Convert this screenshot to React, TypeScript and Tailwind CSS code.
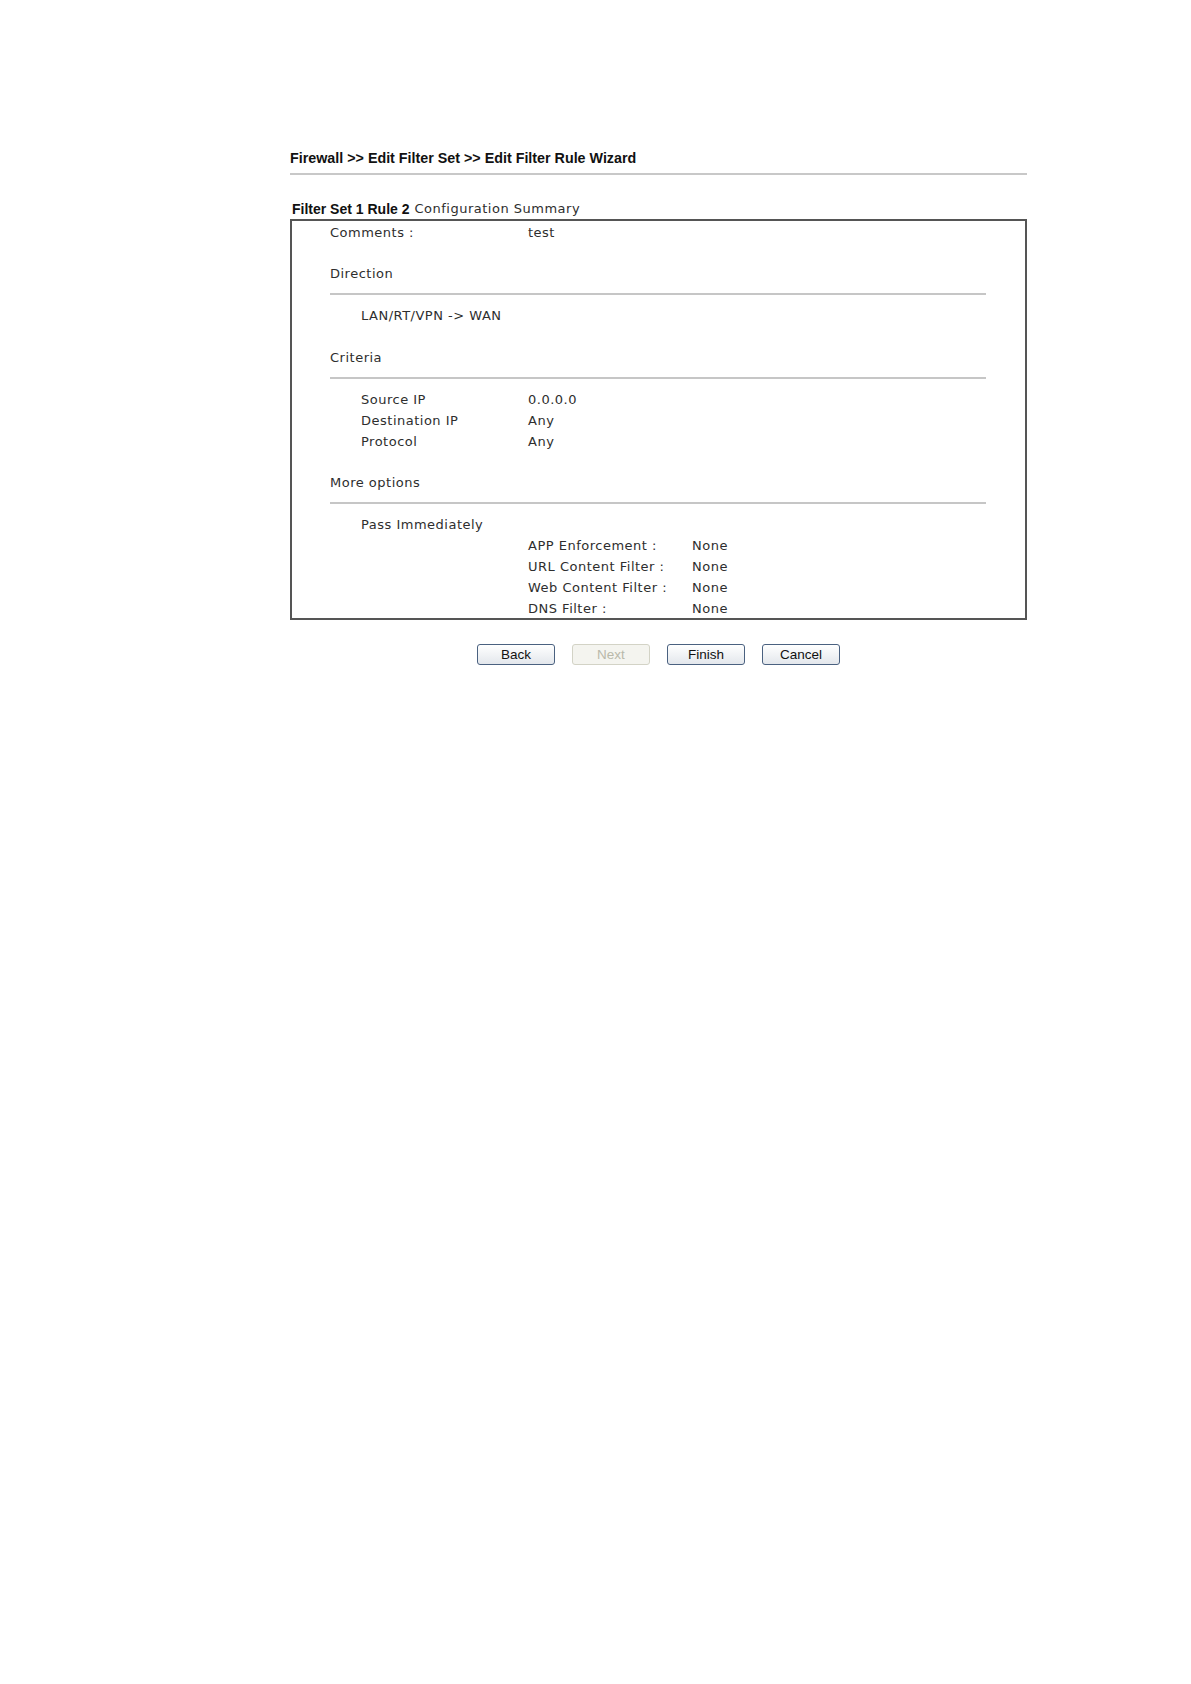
const body = "font-['DejaVu_Sans',Verdana,sans-serif] text-[13px] tracking-[0.5px] text-[#2e2e2e]";

function Row({ children }: { children?: React.ReactNode }) {
  return <div className="h-[20.9px] pt-[2px] flex items-center whitespace-nowrap">{children}</div>;
}

function Rule() {
  return (
    <div className="h-[20.9px] flex items-center ml-[38px] mr-[39px]">
      <div className="h-[2px] w-full bg-[#c6c6c6]" />
    </div>
  );
}

function Section({ title }: { title: string }) {
  return (
    <Row>
      <span className="pl-[38px]">{title}</span>
    </Row>
  );
}

function Item({ label, value }: { label?: string; value?: string }) {
  return (
    <Row>
      <span className="pl-[69px] w-[236px] shrink-0">{label}</span>
      <span>{value}</span>
    </Row>
  );
}

function SubItem({ label, value }: { label: string; value: string }) {
  return (
    <Row>
      <span className="pl-[236px] w-[400px] shrink-0">{label}</span>
      <span>{value}</span>
    </Row>
  );
}

function Button({ label, disabled }: { label: string; disabled?: boolean }) {
  return (
    <button
      disabled={disabled}
      className={
        disabled
          ? "w-[78px] h-[21px] rounded-[3px] border border-[#d3d3c6] bg-[#f4f4ef] text-[#b9b9aa] font-['Liberation_Sans',Arial,sans-serif] text-[13.5px] leading-none"
          : "w-[78px] h-[21px] rounded-[3px] border border-[#4a6180] bg-gradient-to-b from-white to-[#e3e7ec] text-[#111] font-['Liberation_Sans',Arial,sans-serif] text-[13.5px] leading-none"
      }
    >
      {label}
    </button>
  );
}

export default function App() {
  return (
    <div className="min-h-[1684px] bg-white">
      <div className="ml-[290px] w-[737px] pt-[150px]">
        <div className="h-[16px] leading-[16px] font-['Liberation_Sans',Arial,sans-serif] font-bold text-[14.3px] text-[#111] whitespace-nowrap">
          Firewall &gt;&gt; Edit Filter Set &gt;&gt; Edit Filter Rule Wizard
        </div>
        <div className="mt-[7px] h-[2px] bg-[#c8c8c8]" />

        <div className="mt-[26px] pl-[2px] h-[16px] leading-[16px] flex items-center whitespace-nowrap">
          <span className="font-['Liberation_Sans',Arial,sans-serif] font-bold text-[14px] text-[#111]">
            Filter Set 1 Rule 2
          </span>
          <span className={`ml-[5px] ${body}`}>Configuration Summary</span>
        </div>

        <div className={`mt-[2px] border-2 border-[#555] ${body}`}>
          <Row>
            <span className="pl-[38px] w-[236px] shrink-0">Comments :</span>
            <span>test</span>
          </Row>
          <Row />
          <Section title="Direction" />
          <Rule />
          <Item label="LAN/RT/VPN -> WAN" />
          <Row />
          <Section title="Criteria" />
          <Rule />
          <Item label="Source IP" value="0.0.0.0" />
          <Item label="Destination IP" value="Any" />
          <Item label="Protocol" value="Any" />
          <Row />
          <Section title="More options" />
          <Rule />
          <Item label="Pass Immediately" />
          <SubItem label="APP Enforcement :" value="None" />
          <SubItem label="URL Content Filter :" value="None" />
          <SubItem label="Web Content Filter :" value="None" />
          <SubItem label="DNS Filter :" value="None" />
        </div>

        <div className="mt-[24px] flex justify-center gap-[17px]">
          <Button label="Back" />
          <Button label="Next" disabled />
          <Button label="Finish" />
          <Button label="Cancel" />
        </div>
      </div>
    </div>
  );
}
